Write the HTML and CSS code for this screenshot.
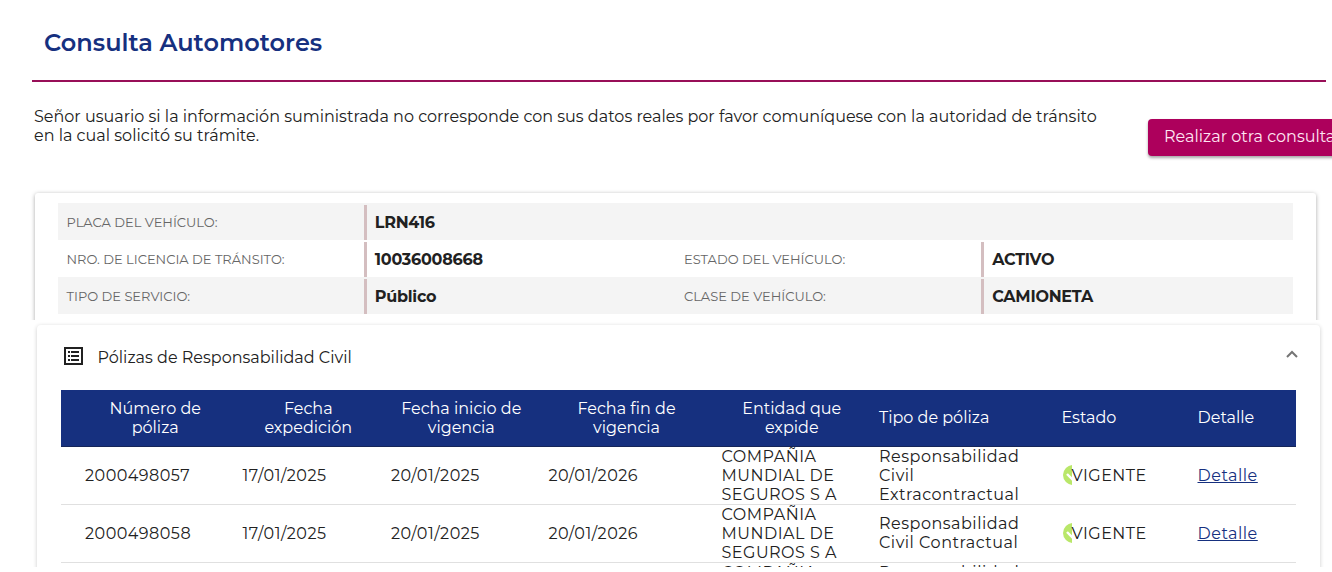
FILE: index.html
```
<!DOCTYPE html>
<html lang="es">
<head>
  <meta charset="UTF-8">
  <meta name="viewport" content="width=device-width, initial-scale=1.0">
  <title>Consulta Automotores</title>
  <link rel="stylesheet" href="styles.css">
</head>
<body>
  <div class="page">
    <h1>Consulta Automotores</h1>

    <div class="intro">
      <p>Señor usuario si la información suministrada no corresponde con sus datos reales por favor comuníquese con la autoridad de tránsito<br>en la cual solicitó su trámite.</p>
      <button class="btn" type="button">Realizar otra consulta</button>
    </div>

    <div class="vehicle-wrap">
      <div class="vehicle">
        <div class="row">
          <div class="label">PLACA DEL VEHÍCULO:</div>
          <div class="value">LRN416</div>
        </div>
        <div class="row">
          <div class="label">NRO. DE LICENCIA DE TRÁNSITO:</div>
          <div class="value">10036008668</div>
          <div class="label">ESTADO DEL VEHÍCULO:</div>
          <div class="value">ACTIVO</div>
        </div>
        <div class="row">
          <div class="label">TIPO DE SERVICIO:</div>
          <div class="value">Público</div>
          <div class="label">CLASE DE VEHÍCULO:</div>
          <div class="value">CAMIONETA</div>
        </div>
      </div>
    </div>

    <div class="panel-wrap">
      <div class="panel">
        <div class="panel-header">
          <svg class="list-icon" width="19" height="18" viewBox="0 0 19 18">
            <path fill="#212121" fill-rule="evenodd" d="M0 0h19v18H0zM2 2v14h15V2zM4 4h2v2H4zM7 4h8v2H7zM4 8h2v2H4zM7 8h8v2H7zM4 12h2v2H4zM7 12h8v2H7z"/>
          </svg>
          <span class="panel-title">Pólizas de Responsabilidad Civil</span>
          <svg class="arrow" width="12" height="8" viewBox="0 0 12 8">
            <path fill="none" stroke="#757575" stroke-width="2" d="M1 7l5-5 5 5"/>
          </svg>
        </div>

        <table>
          <colgroup>
            <col class="c1"><col class="c2"><col class="c3"><col class="c4">
            <col class="c5"><col class="c6"><col class="c7"><col class="c8">
          </colgroup>
          <thead>
            <tr>
              <th>Número de<br>póliza</th>
              <th>Fecha<br>expedición</th>
              <th>Fecha inicio de<br>vigencia</th>
              <th>Fecha fin de<br>vigencia</th>
              <th>Entidad que<br>expide</th>
              <th class="left">Tipo de póliza</th>
              <th class="left">Estado</th>
              <th class="left">Detalle</th>
            </tr>
          </thead>
          <tbody>
            <tr>
              <td>2000498057</td>
              <td>17/01/2025</td>
              <td>20/01/2025</td>
              <td>20/01/2026</td>
              <td>COMPAÑIA<br>MUNDIAL DE<br>SEGUROS S A</td>
              <td>Responsabilidad<br>Civil<br>Extracontractual</td>
              <td><div class="status"><svg width="9" height="20" viewBox="0 0 9 20"><circle cx="10" cy="10" r="10" fill="#b9e769"/><path d="M4 9l6 6" stroke="#fff" stroke-width="2.4"/></svg>VIGENTE</div></td>
              <td><a href="#">Detalle</a></td>
            </tr>
            <tr>
              <td>2000498058</td>
              <td>17/01/2025</td>
              <td>20/01/2025</td>
              <td>20/01/2026</td>
              <td>COMPAÑIA<br>MUNDIAL DE<br>SEGUROS S A</td>
              <td class="two-lines">Responsabilidad<br>Civil Contractual</td>
              <td><div class="status"><svg width="9" height="20" viewBox="0 0 9 20"><circle cx="10" cy="10" r="10" fill="#b9e769"/><path d="M4 9l6 6" stroke="#fff" stroke-width="2.4"/></svg>VIGENTE</div></td>
              <td><a href="#">Detalle</a></td>
            </tr>
            <tr>
              <td></td>
              <td></td>
              <td></td>
              <td></td>
              <td>COMPAÑIA<br>MUNDIAL DE<br>SEGUROS S A</td>
              <td>Responsabilidad<br>Civil<br>Extracontractual</td>
              <td></td>
              <td></td>
            </tr>
          </tbody>
        </table>
      </div>
    </div>
  </div>
</body>
</html>
```

FILE: styles.css
```
* {
  box-sizing: border-box;
}

body {
  margin: 0;
  background: #fff;
  color: #212121;
  font-family: Montserrat, Inter, sans-serif;
  font-size: 16px;
  line-height: 19px;
  overflow: hidden;
}

.page {
  width: 1332px;
  height: 567px;
  overflow: hidden;
}

h1 {
  margin: 0 6px 0 32px;
  padding: 28px 12px 22px;
  height: 82px;
  border-bottom: 2px solid #980f58;
  color: #16307f;
  font-size: 24px;
  font-weight: 600;
  line-height: 30px;
  letter-spacing: 0.03px;
}

.intro {
  display: flex;
  height: 106px;
  padding: 25px 0 0 34px;
}

.intro p {
  flex: none;
  width: 1114px;
  margin: 0;
  white-space: nowrap;
}

.btn {
  flex: none;
  width: 203px;
  height: 37px;
  margin-top: 12px;
  padding: 0 16px 2px;
  border: 0;
  border-radius: 4px;
  background: #ad005c;
  box-shadow: 0 2px 3px rgba(0,0,0,0.35);
  color: #ffe6f3;
  font: inherit;
  text-align: left;
  white-space: nowrap;
}

.vehicle-wrap {
  height: 132px;
  padding: 5px 16px 0 35px;
  overflow: hidden;
}

.vehicle {
  height: 150px;
  padding: 10px 23px;
  border-radius: 3px;
  box-shadow: 0 1px 4px rgba(0,0,0,0.35);
}

.row {
  display: grid;
  grid-template-columns: repeat(4, 1fr);
  height: 37px;
}

.row:nth-child(odd) {
  background: #f4f4f4;
}

.label {
  margin-top: 2px;
  padding: 8px 0 0 8.5px;
  border-right: 3px solid #d4bec0;
  color: #666;
  font-size: 13px;
}

.value {
  padding: 10px 0 0 8px;
  font-weight: 700;
  letter-spacing: -0.25px;
}

.panel-wrap {
  height: 247px;
  padding: 5px 12px 0 37px;
  overflow: hidden;
}

.panel {
  height: 260px;
  padding: 0 24px;
  border-radius: 4px;
  box-shadow: 0 1px 4px rgba(0,0,0,0.2);
}

.panel-header {
  display: flex;
  align-items: center;
  height: 65px;
  padding: 0 0 3px 3px;
}

.list-icon {
  margin-bottom: 1px;
}

.panel-title {
  margin: 2px auto 0 14.5px;
}

.arrow {
  margin: 0 -2px 4px 0;
}

table {
  width: 1235px;
  table-layout: fixed;
  border-collapse: separate;
  border-spacing: 0;
}

.c1 { width: 181.5px; }
.c2 { width: 148.5px; }
.c3 { width: 157.5px; }
.c4 { width: 173px; }
.c5 { width: 157.5px; }
.c6 { width: 182.5px; }
.c7 { width: 136px; }
.c8 { width: 98.5px; }

th,
td {
  padding: 0 17px 0 0;
  white-space: nowrap;
}

th {
  height: 57px;
  background: #16307f;
  border-bottom: 1px solid #152559;
  color: #fff;
  font-weight: 400;
}

td {
  height: 58px;
  border-bottom: 1px solid #e0e0e0;
  letter-spacing: 0.5px;
}

th:first-child,
td:first-child {
  padding-left: 24px;
}

th.left {
  padding-bottom: 1px;
  text-align: left;
}

.two-lines {
  padding-bottom: 1px;
}

.status {
  display: flex;
  align-items: center;
  padding-left: 1px;
}

.status svg {
  margin-bottom: 1px;
}

td a {
  color: #16307f;
}
```
